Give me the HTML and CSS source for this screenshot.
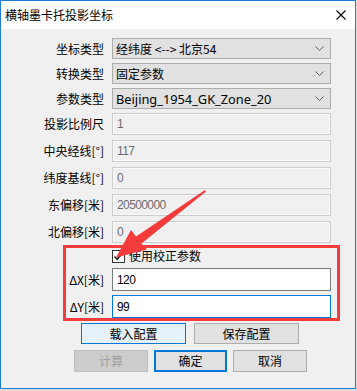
FILE: index.html
```html
<!DOCTYPE html>
<html lang="zh">
<head>
<meta charset="utf-8">
<link rel="stylesheet" href="styles.css">
</head>
<body>
<div class="window">
  <div class="titlebar">
    <span class="title">横轴墨卡托投影坐标</span>
    <svg class="close" width="10" height="10" viewBox="0 0 10 10"><path d="M0.5 0.5 L9.5 9.5 M9.5 0.5 L0.5 9.5" stroke="#000" stroke-width="1.1" fill="none"/></svg>
  </div>
  <div class="body">
    <div class="row combo-row">
      <div class="lbl">坐标类型</div>
      <div class="combo"><span>经纬度 &lt;--&gt; 北京54</span><svg class="chev" width="9" height="5" viewBox="0 0 9 5"><path d="M0.5 0.5 L4.5 4.5 L8.5 0.5" stroke="#606060" fill="none"/></svg></div>
    </div>
    <div class="row combo-row">
      <div class="lbl">转换类型</div>
      <div class="combo"><span>固定参数</span><svg class="chev" width="9" height="5" viewBox="0 0 9 5"><path d="M0.5 0.5 L4.5 4.5 L8.5 0.5" stroke="#606060" fill="none"/></svg></div>
    </div>
    <div class="row combo-row">
      <div class="lbl">参数类型</div>
      <div class="combo"><span class="latin">Beijing_1954_GK_Zone_20</span><svg class="chev" width="9" height="5" viewBox="0 0 9 5"><path d="M0.5 0.5 L4.5 4.5 L8.5 0.5" stroke="#606060" fill="none"/></svg></div>
    </div>
    <div class="row text-row first-text">
      <div class="lbl">投影比例尺</div>
      <div class="tbox disabled">1</div>
    </div>
    <div class="row text-row">
      <div class="lbl">中央经线[°]</div>
      <div class="tbox disabled">117</div>
    </div>
    <div class="row text-row">
      <div class="lbl">纬度基线[°]</div>
      <div class="tbox disabled">0</div>
    </div>
    <div class="row text-row">
      <div class="lbl">东偏移[米]</div>
      <div class="tbox disabled">20500000</div>
    </div>
    <div class="row text-row last-text">
      <div class="lbl">北偏移[米]</div>
      <div class="tbox disabled">0</div>
    </div>

    <div class="redbox">
      <div class="check-row">
        <span class="checkbox"><svg width="11" height="11" viewBox="0 0 11 11"><path d="M1.5 5.5 L4.2 8.3 L9.5 2" stroke="#222" stroke-width="1.6" fill="none"/></svg></span>
        <span class="check-label">使用校正参数</span>
      </div>
      <div class="row delta-row">
        <div class="lbl small">ΔX[米]</div>
        <div class="tbox edit">120</div>
      </div>
      <div class="row delta-row second">
        <div class="lbl small">ΔY[米]</div>
        <div class="tbox edit focus">99</div>
      </div>
    </div>

    <div class="btn-row one">
      <div class="btn hover w105">载入配置</div>
      <div class="btn w105">保存配置</div>
    </div>
    <div class="btn-row two">
      <div class="btn disabled-btn w74">计算</div>
      <div class="btn default w73">确定</div>
      <div class="btn w74">取消</div>
    </div>
  </div>

  <svg class="arrow" width="357" height="391" viewBox="0 0 357 391">
    <polygon fill="#f53b3b" points="205,190 206,191.5 141.5,243.5 147,249.5 116,257.5 131,230 136,236.5"/>
  </svg>
</div>
</body>
</html>
```

FILE: styles.css
```css
html, body {
  margin: 0;
  padding: 0;
  background: #dcdcdc;
}
body {
  width: 357px;
  height: 391px;
  overflow: hidden;
  font-family: "Noto Sans CJK SC", "Noto Sans", sans-serif;
  font-size: 12px;
  color: #000;
}
.window {
  position: relative;
  box-sizing: border-box;
  width: 356px;
  height: 389px;
  border: 1px solid #1c7ed6;
  background: #f0f0f0;
}
.titlebar {
  height: 28px;
  background: #fff;
  display: flex;
  align-items: center;
  justify-content: space-between;
  padding: 0 9px 0 4px;
}
.title {
  font-size: 12px;
  line-height: 14px;
}
.close {
  display: block;
}
.body {
  padding-top: 9px;
}
.row {
  display: flex;
  align-items: center;
  column-gap: 8px;
}
.lbl {
  width: 103px;
  text-align: right;
  white-space: nowrap;
  line-height: 14px;
}
.lbl.small {
  width: 38px;
}
.combo-row {
  margin-bottom: 4px;
}
.combo {
  box-sizing: border-box;
  width: 219px;
  height: 21px;
  background: #e1e1e1;
  border: 1px solid #adadad;
  display: flex;
  align-items: center;
  justify-content: space-between;
  padding: 0 6px 0 3px;
  line-height: 14px;
}
.latin {
  font-family: "Noto Sans", sans-serif;
  font-size: 12.8px;
}
.chev {
  display: block;
}
.text-row {
  margin-bottom: 5px;
}
.last-text {
  margin-bottom: 2px;
}
.tbox {
  box-sizing: border-box;
  width: 219px;
  height: 22px;
  display: flex;
  align-items: center;
  padding-left: 4px;
  font-family: "Liberation Sans", sans-serif;
  font-size: 12px;
  letter-spacing: -0.6px;
  line-height: 14px;
}
.tbox.disabled {
  border: 1px solid #cccccc;
  box-shadow: inset 0 0 0 1px #fafafa;
  background: #f0f0f0;
  color: #6d6d6d;
}
.tbox.edit {
  height: 23px;
  border: 1px solid #7a7a7a;
  background: #fff;
  color: #000;
}
.tbox.edit.focus {
  border-color: #0078d7;
}
.redbox {
  box-sizing: border-box;
  margin-left: 62px;
  width: 277px;
  height: 76px;
  border: 3px solid #f53b3b;
  padding-top: 1px;
}
.check-row {
  display: flex;
  align-items: center;
  margin-left: 46px;
  height: 14px;
  column-gap: 4px;
}
.checkbox {
  box-sizing: border-box;
  width: 13px;
  height: 13px;
  border: 1px solid #333;
  background: #fff;
  display: flex;
  align-items: center;
  justify-content: center;
}
.checkbox svg {
  display: block;
}
.check-label {
  line-height: 14px;
}
.delta-row {
  margin-top: 5px;
}
.delta-row.second {
  margin-top: 4px;
}
.btn-row {
  display: flex;
}
.btn-row.one {
  margin-top: 2px;
  margin-left: 80px;
  column-gap: 8px;
}
.btn-row.two {
  margin-top: 6px;
  margin-left: 73px;
  column-gap: 6px;
}
.btn {
  box-sizing: border-box;
  height: 21px;
  background: #e1e1e1;
  border: 1px solid #adadad;
  display: flex;
  align-items: center;
  justify-content: center;
  line-height: 14px;
}
.btn-row.two .btn {
  height: 22px;
}
.w105 { width: 105px; }
.w74 { width: 74px; }
.w73 { width: 73px; }
.btn.hover {
  background: #e5f1fb;
  border-color: #0078d7;
}
.btn.default {
  border: 2px solid #0078d7;
}
.btn.disabled-btn {
  background: #cccccc;
  border-color: #bfbfbf;
  color: #a0a0a0;
}
.arrow {
  position: absolute;
  left: -1px;
  top: -1px;
  pointer-events: none;
}
```
